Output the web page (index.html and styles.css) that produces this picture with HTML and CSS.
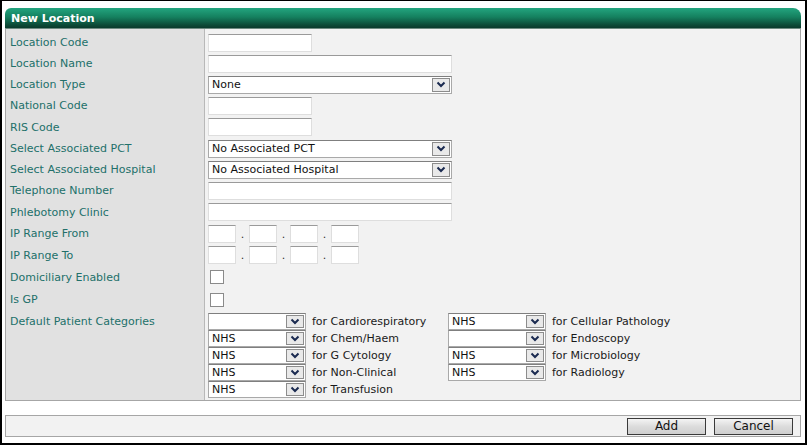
FILE: index.html
```html
<!DOCTYPE html>
<html lang="en">
<head>
  <meta charset="UTF-8">
  <title>New Location</title>
  <link rel="stylesheet" href="styles.css">
</head>
<body>
<div class="frame">
  <div class="panel">
    <div class="panel-head">New Location</div>
    <div class="panel-body">
      <div class="row"><div class="lbl">Location Code</div><div class="fld"><input class="txt short" type="text"></div></div>
      <div class="row"><div class="lbl">Location Name</div><div class="fld"><input class="txt long" type="text"></div></div>
      <div class="row"><div class="lbl">Location Type</div><div class="fld">
        <div class="combo long"><span class="val">None</span><span class="arrow"><svg width="10" height="7" viewBox="0 0 10 7"><path d="M1.5 1.5 L5 5 L8.5 1.5" fill="none" stroke="#1a2a50" stroke-width="2"/></svg></span></div>
      </div></div>
      <div class="row"><div class="lbl">National Code</div><div class="fld"><input class="txt short" type="text"></div></div>
      <div class="row tall"><div class="lbl">RIS Code</div><div class="fld"><input class="txt short" type="text"></div></div>
      <div class="row"><div class="lbl">Select Associated PCT</div><div class="fld">
        <div class="combo long"><span class="val">No Associated PCT</span><span class="arrow"><svg width="10" height="7" viewBox="0 0 10 7"><path d="M1.5 1.5 L5 5 L8.5 1.5" fill="none" stroke="#1a2a50" stroke-width="2"/></svg></span></div>
      </div></div>
      <div class="row"><div class="lbl">Select Associated Hospital</div><div class="fld">
        <div class="combo long"><span class="val">No Associated Hospital</span><span class="arrow"><svg width="10" height="7" viewBox="0 0 10 7"><path d="M1.5 1.5 L5 5 L8.5 1.5" fill="none" stroke="#1a2a50" stroke-width="2"/></svg></span></div>
      </div></div>
      <div class="row"><div class="lbl">Telephone Number</div><div class="fld"><input class="txt long" type="text"></div></div>
      <div class="row tall"><div class="lbl">Phlebotomy Clinic</div><div class="fld"><input class="txt long" type="text"></div></div>
      <div class="row"><div class="lbl">IP Range From</div><div class="fld ip">
        <input class="txt oct" type="text"><span class="dot">.</span><input class="txt oct" type="text"><span class="dot">.</span><input class="txt oct" type="text"><span class="dot">.</span><input class="txt oct" type="text">
      </div></div>
      <div class="row tall"><div class="lbl">IP Range To</div><div class="fld ip">
        <input class="txt oct" type="text"><span class="dot">.</span><input class="txt oct" type="text"><span class="dot">.</span><input class="txt oct" type="text"><span class="dot">.</span><input class="txt oct" type="text">
      </div></div>
      <div class="row tall"><div class="lbl">Domiciliary Enabled</div><div class="fld"><span class="check"></span></div></div>
      <div class="row taller"><div class="lbl">Is GP</div><div class="fld"><span class="check"></span></div></div>
      <div class="row cats-row"><div class="lbl cats-lbl">Default Patient Categories</div>
        <div class="fld cats">
          <div class="cat"><div class="combo mini"><span class="val"></span><span class="arrow"><svg width="10" height="7" viewBox="0 0 10 7"><path d="M1.5 1.5 L5 5 L8.5 1.5" fill="none" stroke="#1a2a50" stroke-width="2"/></svg></span></div><span class="for">for Cardiorespiratory</span></div>
          <div class="cat"><div class="combo mini"><span class="val">NHS</span><span class="arrow"><svg width="10" height="7" viewBox="0 0 10 7"><path d="M1.5 1.5 L5 5 L8.5 1.5" fill="none" stroke="#1a2a50" stroke-width="2"/></svg></span></div><span class="for">for Cellular Pathology</span></div>
          <div class="cat"><div class="combo mini"><span class="val">NHS</span><span class="arrow"><svg width="10" height="7" viewBox="0 0 10 7"><path d="M1.5 1.5 L5 5 L8.5 1.5" fill="none" stroke="#1a2a50" stroke-width="2"/></svg></span></div><span class="for">for Chem/Haem</span></div>
          <div class="cat"><div class="combo mini"><span class="val"></span><span class="arrow"><svg width="10" height="7" viewBox="0 0 10 7"><path d="M1.5 1.5 L5 5 L8.5 1.5" fill="none" stroke="#1a2a50" stroke-width="2"/></svg></span></div><span class="for">for Endoscopy</span></div>
          <div class="cat"><div class="combo mini"><span class="val">NHS</span><span class="arrow"><svg width="10" height="7" viewBox="0 0 10 7"><path d="M1.5 1.5 L5 5 L8.5 1.5" fill="none" stroke="#1a2a50" stroke-width="2"/></svg></span></div><span class="for">for G Cytology</span></div>
          <div class="cat"><div class="combo mini"><span class="val">NHS</span><span class="arrow"><svg width="10" height="7" viewBox="0 0 10 7"><path d="M1.5 1.5 L5 5 L8.5 1.5" fill="none" stroke="#1a2a50" stroke-width="2"/></svg></span></div><span class="for">for Microbiology</span></div>
          <div class="cat"><div class="combo mini"><span class="val">NHS</span><span class="arrow"><svg width="10" height="7" viewBox="0 0 10 7"><path d="M1.5 1.5 L5 5 L8.5 1.5" fill="none" stroke="#1a2a50" stroke-width="2"/></svg></span></div><span class="for">for Non-Clinical</span></div>
          <div class="cat"><div class="combo mini"><span class="val">NHS</span><span class="arrow"><svg width="10" height="7" viewBox="0 0 10 7"><path d="M1.5 1.5 L5 5 L8.5 1.5" fill="none" stroke="#1a2a50" stroke-width="2"/></svg></span></div><span class="for">for Radiology</span></div>
          <div class="cat"><div class="combo mini"><span class="val">NHS</span><span class="arrow"><svg width="10" height="7" viewBox="0 0 10 7"><path d="M1.5 1.5 L5 5 L8.5 1.5" fill="none" stroke="#1a2a50" stroke-width="2"/></svg></span></div><span class="for">for Transfusion</span></div>
        </div>
      </div>
    </div>
  </div>
  <div class="footer">
    <button class="btn" type="button">Add</button>
    <button class="btn" type="button">Cancel</button>
  </div>
</div>
</body>
</html>
```

FILE: styles.css
```css
html, body {
  margin: 0;
  padding: 0;
}

body {
  font-family: "DejaVu Sans", Verdana, sans-serif;
  font-size: 11px;
  background: #ffffff;
}

.frame {
  width: 807px;
  height: 445px;
  box-sizing: border-box;
  border: 2px solid #000;
  border-top-width: 1px;
  padding: 7px 4px 0 3px;
  background: #fff;
}

.panel-head {
  height: 20px;
  line-height: 21px;
  padding-left: 6px;
  color: #fff;
  font-weight: bold;
  border-radius: 6px 8px 0 0;
  background: linear-gradient(#23a57f, #15805f 45%, #0c4a37 85%, #0a3a2c);
}

.panel-body {
  border: 1px solid #a6a6a6;
  border-top: 1px solid #6d8a80;
  background: linear-gradient(to right, #e1e1e1 198px, #b8b8b8 198px, #b8b8b8 199px, #f2f2f2 199px);
  padding: 3px 0 2px 0;
}

.row {
  display: grid;
  grid-template-columns: 200px 1fr;
  height: 21px;
  align-items: center;
}

.row.tall { height: 22px; }
.row.taller { height: 23px; }

.lbl {
  color: #22706a;
  padding-left: 4px;
}

.fld {
  padding-left: 2px;
  display: flex;
  align-items: center;
}

.txt {
  box-sizing: border-box;
  height: 18px;
  margin: 0;
  padding: 0 3px;
  background: #fff;
  border: 1px solid #dedede;
  border-top-color: #9a9a9a;
  font: inherit;
}

.short { width: 104px; }
.long { width: 244px; }
.oct { width: 28px; }

.dot {
  width: 13px;
  text-align: center;
  color: #333;
  line-height: 18px;
  padding-top: 2px;
}

.combo {
  position: relative;
  box-sizing: border-box;
  height: 18px;
  background: #fff;
  border: 1px solid #a9a9a9;
  border-top-color: #7f7f7f;
  display: flex;
  align-items: center;
}

.combo .val {
  padding-left: 3px;
  color: #111;
}

.combo .arrow {
  position: absolute;
  right: 1px;
  top: 1px;
  bottom: 1px;
  width: 18px;
  box-sizing: border-box;
  border: 1px solid #8c8c8c;
  background: #e9e9e9;
  display: flex;
  align-items: center;
  justify-content: center;
}

.combo.mini {
  width: 98px;
  height: 17px;
}

.check {
  display: block;
  width: 12px;
  height: 12px;
  margin-left: 2px;
  background: #fff;
  border: 1px solid #8a8a8a;
}

.cats-row {
  height: auto;
  align-items: start;
  margin-top: 2px;
}

.cats-lbl {
  line-height: 17px;
}

.cats {
  display: grid;
  grid-template-columns: 240px auto;
  justify-content: start;
  align-items: center;
}

.cat {
  display: flex;
  align-items: center;
  height: 17px;
}

.for {
  padding-left: 6px;
  color: #1a1a1a;
}

.footer {
  margin-top: 14px;
  height: 22px;
  box-sizing: border-box;
  border: 1px solid #a6a6a6;
  background: #f2f2f2;
  display: flex;
  justify-content: flex-end;
  align-items: center;
  gap: 8px;
  padding-right: 7px;
}

.btn {
  width: 79px;
  height: 17px;
  margin: 0;
  padding: 0;
  font: inherit;
  font-size: 12px;
  color: #111;
  border: 1px solid #3a3a3a;
  border-radius: 0;
  background: linear-gradient(#f4f4f4, #dcdcdc 50%, #cfcfcf);
  cursor: pointer;
}
```
